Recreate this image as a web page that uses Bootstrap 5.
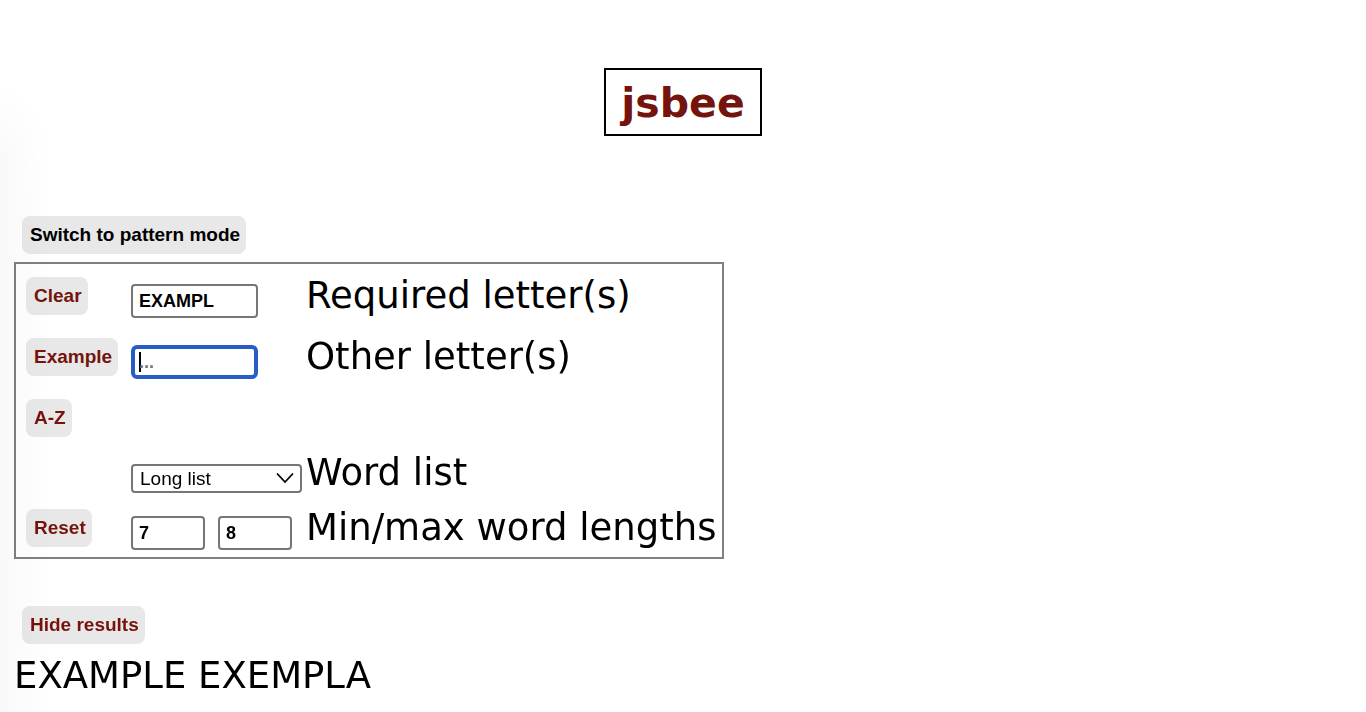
<!DOCTYPE html>
<html lang="en">
<head>
<meta charset="utf-8">
<meta name="viewport" content="width=device-width, initial-scale=1">
<title>jsbee</title>
<link href="https://cdn.jsdelivr.net/npm/bootstrap@5.3.0/dist/css/bootstrap.min.css" rel="stylesheet">
<style>
  body { font-family: "DejaVu Sans", Verdana, sans-serif; font-size: 37px; line-height: 44px; color: #000; background: #fff; overflow-x: hidden; }
  /* soft shade along the left edge of the window */
  body::before { content: ""; position: fixed; left: -40px; top: 120px; bottom: -80px; width: 40px; box-shadow: 0 0 64px rgba(0,0,0,.07); pointer-events: none; z-index: 5; }
  main { padding: 68px 14px 0; }
  .site-title { border: 2px solid #000; color: #75140c; font-size: 41px; font-weight: 700; line-height: 48px; padding: 9px 15px 7px; margin: 0 0 80px; }
  .bee-btn { --bs-btn-color: #75140c; --bs-btn-bg: #e8e8e8; --bs-btn-hover-bg: #dcdcdc; --bs-btn-hover-color: #75140c; --bs-btn-border-width: 0; --bs-btn-border-radius: 8px; --bs-btn-padding-x: 8px; --bs-btn-padding-y: 0; --bs-btn-font-family: "Liberation Sans", Arial, sans-serif; --bs-btn-font-size: 19px; --bs-btn-font-weight: 700; --bs-btn-line-height: 38px; height: 38px; display: block; padding-right: 6px; }
  .bee-btn-dark { --bs-btn-color: #000; --bs-btn-hover-color: #000; }
  .panel { border: 2px solid #808080; width: fit-content; padding-right: 6px; margin-bottom: 47px; }
  .line { min-height: 61px; display: grid; grid-template-columns: 105px 175px auto; align-items: end; padding-left: 10px; }
  .line-short { min-height: 49px; }
  .line .bee-btn { margin-bottom: 10px; justify-self: start; }
  .line label { padding-bottom: 7px; }
  .line-short label { padding-bottom: 1px; }
  .field { font: 700 18px/24px "Liberation Sans", Arial, sans-serif; color: #000; border: 2px solid #767676; border-radius: 4px; padding: 3px 6px; height: 34px; width: 127px; min-height: 0; margin-bottom: 7px; }
  .field::placeholder { color: #757575; opacity: 1; }
  .field:focus { color: #000; border: 4px solid #265dc8; border-radius: 6px; padding: 1px 4px; box-shadow: none; }
  /* steady text cursor while the box is still empty */
  .field:focus:placeholder-shown { caret-color: transparent; background: linear-gradient(#000, #000) 4px center / 2px 20px no-repeat #fff; }
  .field-num { width: 74px; }
  .num-pair { column-gap: 13px; }
  .list-pick { position: relative; width: 171px; margin-bottom: 3px; }
  .list-pick select { display: block; width: 100%; height: 29px; appearance: none; font: 400 19px/24px "Liberation Sans", Arial, sans-serif; color: #000; background: #fff; border: 2px solid #767676; border-radius: 4px; padding: 0 26px 0 7px; }
  .list-pick svg { position: absolute; right: 8px; top: 8px; pointer-events: none; }
  .results { margin: 10px 0 0; }
</style>
<script src="https://cdn.jsdelivr.net/npm/bootstrap@5.3.0/dist/js/bootstrap.bundle.min.js"></script>
</head>
<body>
<main>
  <header class="d-flex justify-content-center">
    <h1 class="site-title">jsbee</h1>
  </header>

  <button type="button" class="btn bee-btn bee-btn-dark ms-2 mb-2">Switch to pattern mode</button>

  <form class="panel">
    <div class="line">
      <button type="button" class="btn bee-btn">Clear</button>
      <input id="required" class="form-control field" type="text" value="EXAMPL">
      <label for="required">Required letter(s)</label>
    </div>
    <div class="line">
      <button type="button" class="btn bee-btn">Example</button>
      <input id="other" class="form-control field" type="text" placeholder="..." autofocus>
      <label for="other">Other letter(s)</label>
    </div>
    <div class="line">
      <button type="button" class="btn bee-btn">A-Z</button>
    </div>
    <div class="line line-short">
      <span></span>
      <div class="list-pick">
        <select id="wordlist"><option>Long list</option><option>Short list</option></select>
        <svg width="18" height="12" viewBox="0 0 18 12" fill="none" stroke="#000" stroke-width="1.8" aria-hidden="true"><path d="M1 1.500 9 10l8-8.500"/></svg>
      </div>
      <label for="wordlist">Word list</label>
    </div>
    <div class="line">
      <button type="button" class="btn bee-btn">Reset</button>
      <div class="d-flex num-pair">
        <input id="minlen" class="form-control field field-num" type="text" value="7" aria-label="Minimum length">
        <input id="maxlen" class="form-control field field-num" type="text" value="8" aria-label="Maximum length">
      </div>
      <label for="minlen">Min/max word lengths</label>
    </div>
  </form>

  <button type="button" class="btn bee-btn ms-2">Hide results</button>
  <p class="results">EXAMPLE EXEMPLA</p>
</main>
<script>document.getElementById("other").focus();</script>
</body>
</html>
